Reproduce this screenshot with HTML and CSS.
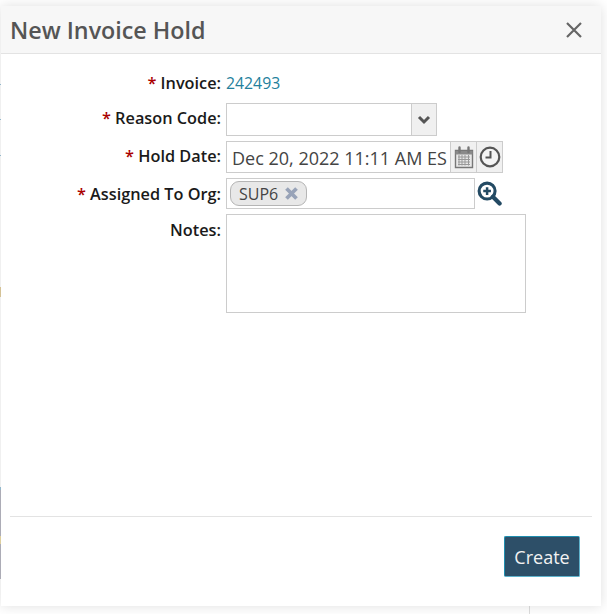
FILE: index.html
```html
<!DOCTYPE html>
<html lang="en">
<head>
<meta charset="utf-8">
<title>New Invoice Hold</title>
<link rel="stylesheet" href="styles.css">
</head>
<body>
<div class="backdrop" aria-hidden="true">
  <span class="strip strip-1"></span>
  <span class="strip strip-2"></span>
  <span class="strip strip-3"></span>
  <span class="strip strip-4"></span>
  <span class="strip strip-a"></span>
  <span class="strip strip-b"></span>
  <span class="strip strip-c"></span>
  <span class="strip strip-d"></span>
  <span class="rule"></span>
</div>
<main class="dialog">
  <header class="dialog-head">
    <h1 class="dialog-title">New Invoice Hold</h1>
    <button class="close" type="button" aria-label="Close">
      <svg width="16" height="16" viewBox="0 0 16 16"><path d="M1 1 15 15M15 1 1 15" stroke="#666" stroke-width="2.200" fill="none"/></svg>
    </button>
  </header>
  <form class="form">
    <div class="row row-text">
      <label class="label"><span class="req">*</span> Invoice:</label>
      <a class="link">242493</a>
    </div>
    <div class="row">
      <label class="label label-raised"><span class="req">*</span> Reason Code:</label>
      <div class="combo">
        <span class="field reason"></span>
        <span class="addon addon-select">
          <svg width="14" height="10" viewBox="0 0 14 10"><path d="M2 2 7 7 12 2" stroke="#555" stroke-width="3" fill="none"/></svg>
        </span>
      </div>
    </div>
    <div class="row">
      <label class="label label-raised"><span class="req">*</span> Hold Date:</label>
      <div class="combo combo-date">
        <span class="field date">Dec 20, 2022 11:11 AM ES</span>
        <span class="addon">
          <svg width="20" height="23" viewBox="0 0 20 23"><path d="M1.500 4.500h17v17h-17z" fill="#e8e8e8" stroke="#777" stroke-width="1.400"/><path d="M1.500 5h17v3.500h-17z" fill="#8a8a8a"/><path d="M4 11h12M4 13.500h12M4 16h12M4 18.500h12M5 9v10.500M8 9v10.500M11 9v10.500M14.500 9v10.500" stroke="#999" stroke-width="1"/><path d="M5.500 1.500v4.500M14.500 1.500v4.500" stroke="#777" stroke-width="2.400" stroke-linecap="round"/></svg>
        </span>
        <span class="addon">
          <svg width="22" height="22" viewBox="0 0 22 22"><circle cx="11" cy="11" r="9.300" fill="#f4f4f4" stroke="#555" stroke-width="2.200"/><path d="M11.500 5v6.500H6.500" stroke="#555" stroke-width="2" fill="none"/></svg>
        </span>
      </div>
    </div>
    <div class="row">
      <label class="label"><span class="req">*</span> Assigned To Org:</label>
      <div class="combo combo-org">
        <div class="field org">
          <span class="chip">SUP6
            <svg class="chip-x" width="15" height="15" viewBox="0 0 15 15"><path d="M2.500 2.500 12.500 12.500M12.500 2.500 2.500 12.500" stroke="#98a3b8" stroke-width="3.800" fill="none"/></svg>
          </span>
        </div>
        <svg class="lookup" width="25" height="25" viewBox="0 0 26 26"><circle cx="10.500" cy="10.500" r="8.300" fill="#fff" stroke="#234a63" stroke-width="3.200"/><path d="M16.500 16.500 23.500 23.500" stroke="#234a63" stroke-width="4.400" stroke-linecap="round"/><path d="M10.500 6.500v8M6.500 10.500h8" stroke="#234a63" stroke-width="2.600"/></svg>
      </div>
    </div>
    <div class="row row-notes">
      <label class="label">Notes:</label>
      <span class="field notes"></span>
    </div>
  </form>
  <footer class="dialog-foot">
    <button class="create" type="button">Create</button>
  </footer>
</main>
</body>
</html>
```
FILE: styles.css
```css
* { box-sizing: border-box; }
html, body { margin: 0; height: 100%; }
body {
  position: relative;
  width: 607px;
  height: 614px;
  overflow: hidden;
  padding: 6px 6px 8px 1px;
  background: #fff;
  font-family: "Open Sans", "Liberation Sans", sans-serif;
  color: #1f1f1f;
}
.backdrop { position: absolute; inset: 0; }
.strip { position: absolute; left: 0; width: 1px; }
.strip-1 { top: 84px; height: 1px; background: #9cc3d8; }
.strip-2 { top: 119px; height: 1px; background: #9cc3d8; }
.strip-3 { top: 155px; height: 1px; background: #9cc3d8; }
.strip-4 { top: 287px; height: 10px; background: #e2cfa0; }
.strip-a { top: 487px; height: 3px; background: #9cc3d8; }
.strip-b { top: 490px; height: 46px; background: #b7b7c2; }
.strip-c { top: 536px; height: 8px; background: #ecdca8; }
.strip-d { top: 544px; height: 35px; background: #b7b7c2; }
.rule { position: absolute; left: 529px; top: 606px; width: 1px; height: 8px; background: #ddd; }
.dialog {
  position: relative;
  display: flex;
  flex-direction: column;
  width: 600px;
  height: 600px;
  background: #fff;
  box-shadow: 0 0 12px rgba(0, 0, 0, .13);
}
.dialog-head {
  flex: none;
  display: flex;
  align-items: center;
  justify-content: space-between;
  height: 48px;
  padding: 0 19px 0 9px;
  background: #f7f7f7;
  border-bottom: 1px solid #e3e3e3;
}
.dialog-title {
  margin: 0;
  font-size: 23.300px;
  font-weight: 600;
  color: #555;
}
.close { display: flex; padding: 0; border: 0; background: none; }
.form {
  flex: 1;
  display: flex;
  flex-direction: column;
  padding-top: 14px;
  gap: 5px;
}
.row {
  display: grid;
  grid-template-columns: 220px 1fr;
  column-gap: 5px;
  align-items: center;
}
.row-text { height: 30px; }
.row-notes { align-items: start; }
.label {
  justify-self: end;
  font-size: 16.300px;
  font-weight: 600;
  line-height: 20px;
  color: #1a1a1a;
  white-space: nowrap;
}
.label-raised { padding-bottom: 3px; }
.row-notes .label { padding-top: 6px; }
.req { color: #a00; }
.link { font-size: 15.800px; color: #23809c; }
.combo { display: flex; align-items: stretch; }
.field {
  display: block;
  background: #fff;
  border: 1px solid #ccc;
}
.reason { width: 186px; height: 33px; }
.date {
  width: 225px;
  height: 32px;
  padding: 0 0 0 5px;
  overflow: hidden;
  font-size: 18px;
  line-height: 32px;
  color: #444;
  white-space: nowrap;
}
.addon {
  display: flex;
  align-items: center;
  justify-content: center;
  width: 26px;
  background: #f0f0f0;
  border: 1px solid #ccc;
  border-left: 0;
}
.addon-select { border-left: 1px solid #ccc; margin-left: -1px; }
.combo-org { align-items: center; gap: 2px; }
.org { width: 249px; height: 31px; padding: 2px 3px; }
.chip {
  display: inline-flex;
  align-items: center;
  gap: 6px;
  height: 25px;
  padding: 0 7px 0 8px;
  font-size: 16px;
  color: #444;
  background: #e8e8e8;
  border: 1px solid #b5b5b5;
  border-radius: 9px;
}
.lookup { flex: none; margin-top: -1px; }
.notes { width: 300px; height: 99px; }
.dialog-foot {
  flex: none;
  display: flex;
  justify-content: flex-end;
  height: 90px;
  margin: 0 9px;
  padding: 19px 12px 0 0;
  border-top: 1px solid #e3e3e3;
}
.create {
  width: 76px;
  height: 41px;
  padding: 0;
  font-family: inherit;
  font-size: 18px;
  color: #f2f2f2;
  background: #2d4f68;
  border: 1px solid;
  border-color: #1f8eaf #5fb3cc #5fb3cc #1f8eaf;
  border-radius: 2px;
}
```
